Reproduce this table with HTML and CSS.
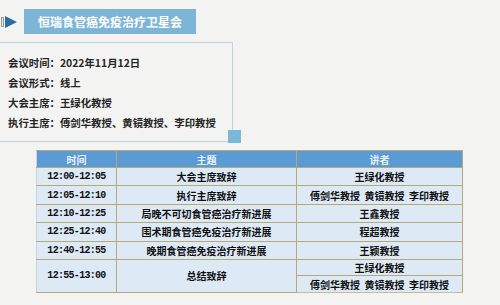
FILE: index.html
```html
<!DOCTYPE html>
<html lang="zh-CN">

<head>
    <meta charset="UTF-8">
    <meta name="viewport" content="width=device-width, initial-scale=1.0">
    <title>恒瑞食管癌免疫治疗卫星会</title>
    <link rel="stylesheet" href="styles.css">
</head>

<body>
    <div class="page">
        <div class="title_row">
            <svg class="arrow" width="18" height="14" viewBox="0 0 18 14">
                <rect x="1.5" y="2.5" width="2" height="9" fill="#e6e6e6" stroke="#9a9a9a" stroke-width="1"/>
                <polygon points="5,1 17,7 5,13" fill="#2c6da4"/>
            </svg>
            <div class="title">恒瑞食管癌免疫治疗卫星会</div>
        </div>

        <div class="info">
            <p>会议时间：2022年11月12日</p>
            <p>会议形式：线上</p>
            <p>大会主席：王绿化教授</p>
            <p>执行主席：傅剑华教授、黄镜教授、李印教授</p>
            <span class="corner"></span>
        </div>

        <table class="agenda">
            <colgroup>
                <col class="c_time">
                <col class="c_topic">
                <col class="c_speaker">
            </colgroup>
            <thead>
                <tr>
                    <th>时间</th>
                    <th>主题</th>
                    <th>讲者</th>
                </tr>
            </thead>
            <tbody>
                <tr>
                    <td class="time">12:00-12:05</td>
                    <td>大会主席致辞</td>
                    <td>王绿化教授</td>
                </tr>
                <tr>
                    <td class="time">12:05-12:10</td>
                    <td>执行主席致辞</td>
                    <td>傅剑华教授&nbsp;&nbsp;黄镜教授&nbsp;&nbsp;李印教授</td>
                </tr>
                <tr>
                    <td class="time">12:10-12:25</td>
                    <td>局晚不可切食管癌治疗新进展</td>
                    <td>王鑫教授</td>
                </tr>
                <tr>
                    <td class="time">12:25-12:40</td>
                    <td>围术期食管癌免疫治疗新进展</td>
                    <td>程超教授</td>
                </tr>
                <tr>
                    <td class="time">12:40-12:55</td>
                    <td>晚期食管癌免疫治疗新进展</td>
                    <td>王颖教授</td>
                </tr>
                <tr class="half">
                    <td class="time" rowspan="2">12:55-13:00</td>
                    <td rowspan="2">总结致辞</td>
                    <td>王绿化教授</td>
                </tr>
                <tr class="half">
                    <td>傅剑华教授&nbsp;&nbsp;黄镜教授&nbsp;&nbsp;李印教授</td>
                </tr>
            </tbody>
        </table>
    </div>
</body>

</html>
```

FILE: styles.css
```css
* {
    margin: 0;
    padding: 0;
    box-sizing: border-box;
}

body {
    background: #f3f3f2;
    font-family: "Noto Sans CJK SC", "Noto Sans", sans-serif;
    color: #1e1e1e;
}

.page {
    width: 500px;
    height: 305px;
    padding-top: 9px;
}

.title_row {
    display: flex;
    align-items: center;
    height: 25px;
}

.title_row .arrow {
    margin-right: 6px;
}

.title {
    width: 172px;
    height: 25px;
    line-height: 25px;
    background: #7db5d6;
    color: #fff;
    font-size: 12px;
    font-weight: bold;
    text-align: center;
}

.info {
    position: relative;
    width: 233px;
    height: 100px;
    margin-top: 8px;
    border: 1px solid #bcd5e6;
    border-left: none;
    padding: 10px 0 0 8px;
}

.info p {
    height: 20px;
    line-height: 20px;
    font-size: 10.4px;
    font-weight: bold;
    color: #262626;
}

.info .corner {
    position: absolute;
    right: -9px;
    bottom: -2px;
    width: 13px;
    height: 13px;
    background: #7ab7d8;
}

.agenda {
    margin: 8px 0 0 36px;
    width: 426px;
    border-collapse: collapse;
    table-layout: fixed;
    border-top: 1px solid #cbbd93;
}

.agenda .c_time {
    width: 80px;
}

.agenda .c_topic {
    width: 180px;
}

.agenda .c_speaker {
    width: 166px;
}

.agenda th,
.agenda td {
    border: 1px solid #b8a878;
    text-align: center;
    font-size: 10px;
    font-weight: bold;
    padding: 0;
    white-space: nowrap;
}

.agenda th {
    height: 17px;
    background: #5b9bd5;
    color: #fff;
    font-weight: normal;
    -webkit-text-stroke: 0.2px #fff;
}

.agenda td {
    height: 18.4px;
    background: #ddeaf6;
    color: #111;
}

.agenda tr.half td {
    height: 16.5px;
}

.agenda td.time {
    font-family: "Liberation Mono", monospace;
    font-size: 10px;
    letter-spacing: -0.7px;
}

.agenda tr td:first-child,
.agenda tr th:first-child {
    border-left-color: #c8d3dc;
}

.agenda tbody tr:last-child td {
    border-bottom-color: #c9bd94;
}
```
